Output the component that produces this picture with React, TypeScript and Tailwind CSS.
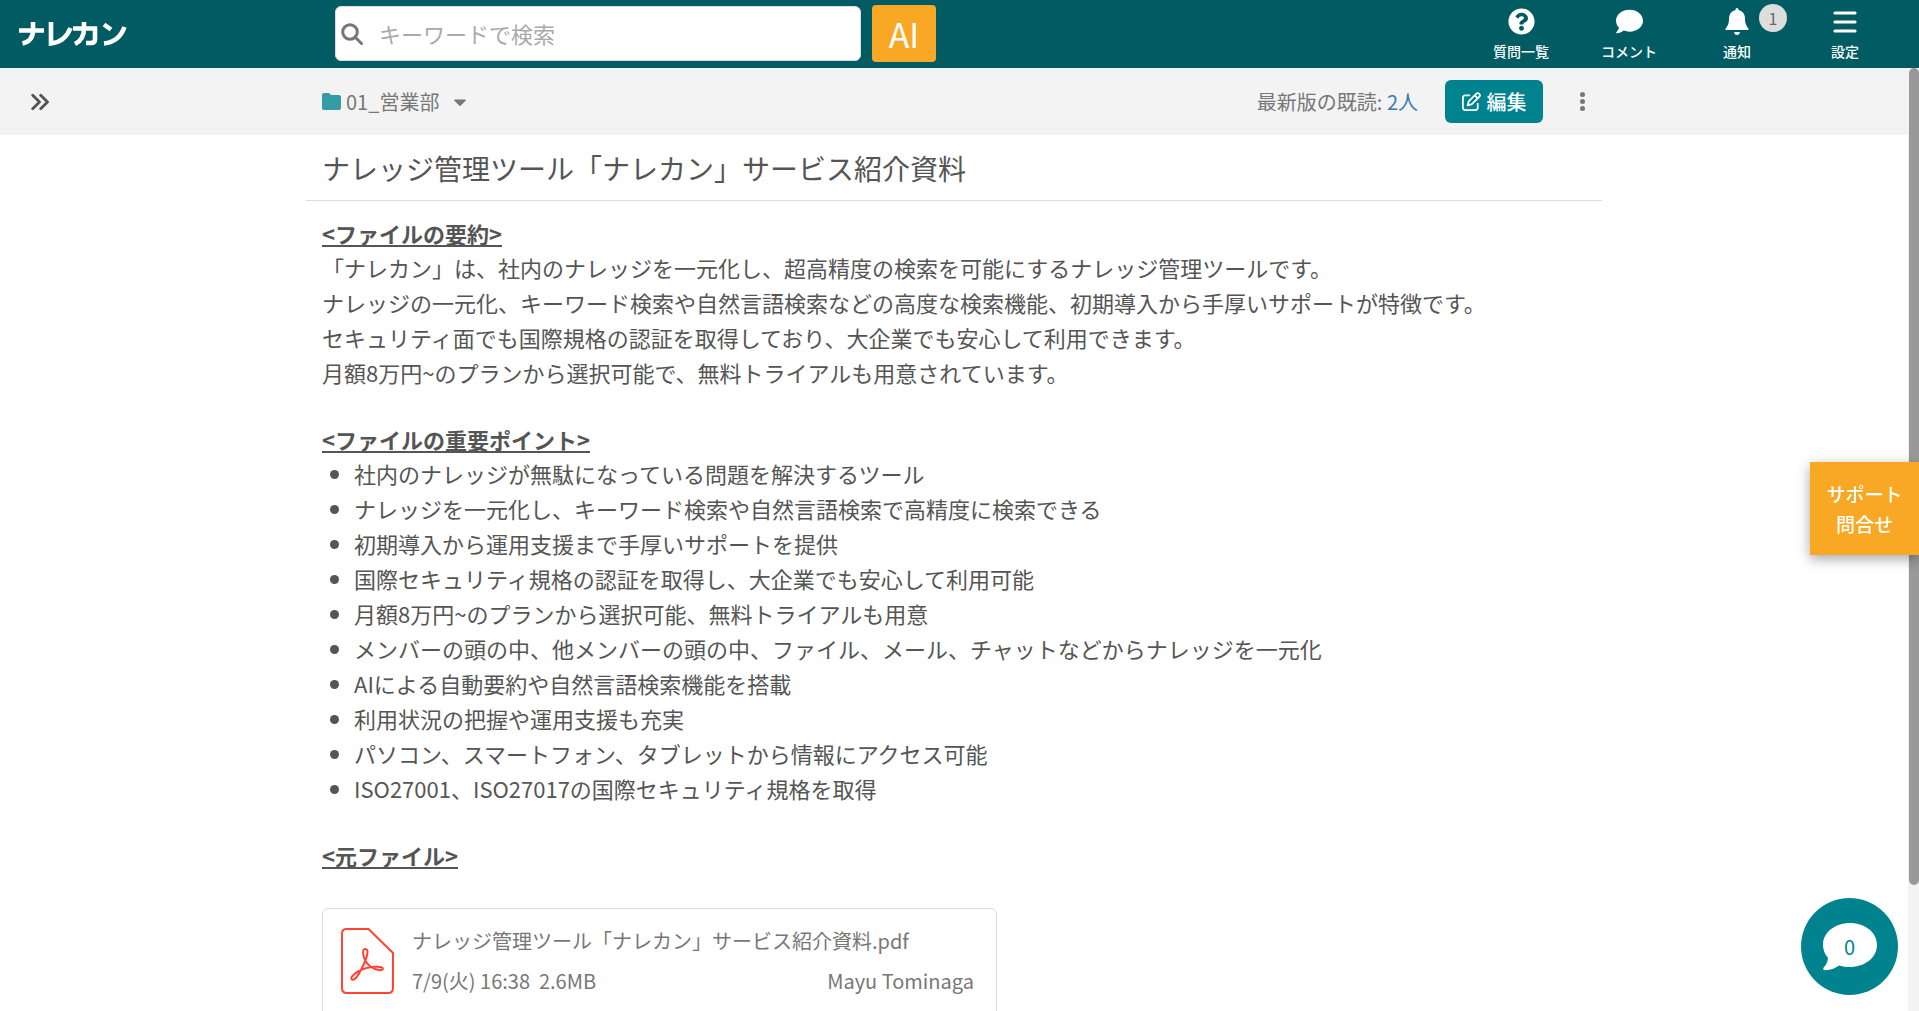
import { ReactNode } from 'react';
import { FaCaretDown, FaComment, FaQuestionCircle } from 'react-icons/fa';
import { FaRegPenToSquare } from 'react-icons/fa6';

// ── Data ──────────────────────────────────────────────────────────────────────

const SUMMARY = [
  '「ナレカン」は、社内のナレッジを一元化し、超高精度の検索を可能にするナレッジ管理ツールです。',
  'ナレッジの一元化、キーワード検索や自然言語検索などの高度な検索機能、初期導入から手厚いサポートが特徴です。',
  'セキュリティ面でも国際規格の認証を取得しており、大企業でも安心して利用できます。',
  '月額8万円~のプランから選択可能で、無料トライアルも用意されています。',
];

const POINTS = [
  '社内のナレッジが無駄になっている問題を解決するツール',
  'ナレッジを一元化し、キーワード検索や自然言語検索で高精度に検索できる',
  '初期導入から運用支援まで手厚いサポートを提供',
  '国際セキュリティ規格の認証を取得し、大企業でも安心して利用可能',
  '月額8万円~のプランから選択可能、無料トライアルも用意',
  'メンバーの頭の中、他メンバーの頭の中、ファイル、メール、チャットなどからナレッジを一元化',
  'AIによる自動要約や自然言語検索機能を搭載',
  '利用状況の把握や運用支援も充実',
  'パソコン、スマートフォン、タブレットから情報にアクセス可能',
  'ISO27001、ISO27017の国際セキュリティ規格を取得',
];

// ── Icons ─────────────────────────────────────────────────────────────────────

function LogoSVG() {
  return (
    <svg width="108" height="26" viewBox="0 0 108 26" fill="none" stroke="white" strokeWidth="4.6" aria-hidden="true">
      <path d="M0 9.5H25M14 1V9.5Q14 20 3.5 22.5"/>
      <path d="M32 1V22.5Q46 21 51.5 7"/>
      <path d="M54 7.5H76V18Q76 22 72 22H67M65 1V7.5Q65 18.5 56 23"/>
      <path d="M85 3.5L92 8.5M85 22.5Q100 21 105.5 6"/>
    </svg>
  );
}

function BellIcon() {
  return (
    <svg width="24" height="27" viewBox="0 0 24 27" fill="white">
      <path d="M12 0Q13.6 0 13.6 2Q20 3.5 20 11Q20 17 23.5 20.5V22H.5V20.5Q4 17 4 11Q4 3.5 10.4 2Q10.4 0 12 0Z"/>
      <path d="M9 24H15Q14.5 27 12 27T9 24Z"/>
    </svg>
  );
}

function MenuIcon() {
  return (
    <svg width="24" height="22" viewBox="0 0 24 22" stroke="white" strokeWidth="3.2" strokeLinecap="round">
      <path d="M2 2H22M2 11H22M2 20H22"/>
    </svg>
  );
}

function SearchIcon() {
  return (
    <svg width="22" height="22" viewBox="0 0 22 22" fill="none" stroke="#777" strokeWidth="3">
      <circle cx="9" cy="9" r="7.3"/>
      <path d="M14 14L20.5 20.5" strokeLinecap="round"/>
    </svg>
  );
}

function ExpandIcon() {
  return (
    <svg width="18" height="18" viewBox="0 0 18 18" fill="none" stroke="#555" strokeWidth="2.8" strokeLinecap="round" strokeLinejoin="round">
      <path d="M1.7 2.2L8.5 9L1.7 15.8M9.7 2.2L16.5 9L9.7 15.8"/>
    </svg>
  );
}

function FolderIcon() {
  return (
    <svg width="19" height="17" viewBox="0 0 19 17" fill="#339ca5">
      <path d="M2 0H7L9 2H17Q19 2 19 4V15Q19 17 17 17H2Q0 17 0 15V2Q0 0 2 0Z"/>
    </svg>
  );
}

function PdfIcon() {
  return (
    <svg width="53" height="66" viewBox="0 0 53 66" fill="none" stroke="#ff4433" strokeWidth="2">
      <path d="M5 1H27.5L52 25V60Q52 65 47 65H6Q1 65 1 60V6Q1 1 5 1Z"/>
      <path d="M24 21C21 21 22 28 24 32C26 36 31 41 38 42C43 42.5 43 39.5 39 39C33 38.5 24 40 18 43C12 46 9 50 11 51.5C14 53 18 46 21 40C24 34 27 27 26.5 23C26 21 25 21 24 21Z"/>
    </svg>
  );
}

// ── Parts ─────────────────────────────────────────────────────────────────────

function NavItem({ label, badge, children }: { label: string; badge?: number; children: ReactNode }) {
  return (
    <button className="relative flex w-[108px] flex-col items-center gap-[5px] text-white">
      <span className="flex h-7 items-center">{children}</span>
      <span className="text-sm font-medium leading-5">{label}</span>
      {badge !== undefined && (
        <span className="absolute -top-1 left-[76px] flex size-7 items-center justify-center rounded-full bg-[#ddd] text-base text-[#666]">
          {badge}
        </span>
      )}
    </button>
  );
}

function SectionTitle({ children }: { children: ReactNode }) {
  return (
    <h2 className="font-bold leading-[34px] underline decoration-2 underline-offset-2">{children}</h2>
  );
}

function Header() {
  return (
    <header className="flex h-[68px] shrink-0 items-center bg-[#005b63] pr-5">
      <a href="#" aria-label="ナレカン" className="w-[335px] shrink-0 pl-[19px]">
        <LogoSVG/>
      </a>
      <form className="flex items-center gap-[11px] pb-px">
        <div className="flex h-[55px] w-[526px] items-center gap-4 rounded-md border border-[#ddd] bg-white pl-[5px]">
          <SearchIcon/>
          <input
            type="text"
            aria-label="キーワードで検索"
            placeholder="キーワードで検索"
            className="min-w-0 flex-1 text-[22px] outline-none placeholder:text-[#aaa]"
          />
        </div>
        <button type="button" className="h-[57px] w-16 rounded-sm bg-[#f9a825] text-[34px] leading-none text-white">AI</button>
      </form>
      <nav className="ml-auto flex">
        <NavItem label="質問一覧"><FaQuestionCircle className="size-[27px]"/></NavItem>
        <NavItem label="コメント"><FaComment className="size-[27px]"/></NavItem>
        <NavItem label="通知" badge={1}><BellIcon/></NavItem>
        <NavItem label="設定"><MenuIcon/></NavItem>
      </nav>
    </header>
  );
}

function Toolbar() {
  return (
    <div className="relative bg-[#f3f3f3]">
      <button aria-label="メニューを開く" className="absolute inset-y-0 left-[31px]">
        <ExpandIcon/>
      </button>
      <div className="mx-auto flex h-[67px] max-w-[1296px] items-center px-4 text-[20px] text-[#777]">
        <button className="flex items-center gap-[5px]">
          <FolderIcon/>
          <span>01_営業部</span>
          <FaCaretDown className="ml-[6px] size-5"/>
        </button>
        <p className="ml-auto">
          最新版の既読: <a href="#" className="text-[#337ab7]">2人</a>
        </p>
        <button className="ml-[27px] flex h-[43px] w-[98px] items-center justify-center gap-[6px] rounded-md bg-[#00838f] font-medium text-white">
          <FaRegPenToSquare className="size-[19px]"/>
          編集
        </button>
        <button aria-label="その他" className="ml-[37px] flex flex-col gap-[2px] pr-px">
          <span className="size-[5px] rounded-full bg-[#777]"/>
          <span className="size-[5px] rounded-full bg-[#777]"/>
          <span className="size-[5px] rounded-full bg-[#777]"/>
        </button>
      </div>
    </div>
  );
}

function FileCard() {
  return (
    <a href="#" className="mt-9 flex h-[120px] max-w-[675px] gap-[18px] rounded-md border border-[#ddd] px-[18px] pt-[19px] text-[20px] text-[#777]">
      <PdfIcon/>
      <div className="flex-1 leading-[26px]">
        <p>ナレッジ管理ツール「ナレカン」サービス紹介資料.pdf</p>
        <div className="mt-[14px] flex justify-between pr-1">
          <p>7/9(火) 16:38&nbsp; 2.6MB</p>
          <p>Mayu Tominaga</p>
        </div>
      </div>
    </a>
  );
}

// ── App ───────────────────────────────────────────────────────────────────────

export default function App() {
  return (
    <div className="flex h-screen flex-col overflow-hidden bg-white font-['Noto_Sans_CJK_JP',sans-serif] text-[#555]">
      <Header/>
      <div className="flex min-h-0 flex-1">
        <main className="min-w-0 flex-1 overflow-hidden">
          <Toolbar/>
          <article className="mx-auto max-w-[1296px]">
            <h1 className="border-b border-[#ddd] px-4 pb-3 pt-[13px] text-[28px] leading-10">
              ナレッジ管理ツール「ナレカン」サービス紹介資料
            </h1>
            <div className="px-4 pt-[15px] text-[22px] leading-[35px]">
              <SectionTitle>&lt;ファイルの要約&gt;</SectionTitle>
              {SUMMARY.map((line) => <p key={line}>{line}</p>)}
              <div className="mt-8">
                <SectionTitle>&lt;ファイルの重要ポイント&gt;</SectionTitle>
                <ul className="list-disc pl-8">
                  {POINTS.map((point) => <li key={point}>{point}</li>)}
                </ul>
              </div>
              <div className="mt-8">
                <SectionTitle>&lt;元ファイル&gt;</SectionTitle>
                <FileCard/>
              </div>
            </div>
          </article>
        </main>
        {/* Scrollbar */}
        <div className="w-[11px] shrink-0 bg-[#f3f3f3] pl-px">
          <div className="h-13/15 rounded-full bg-[#999]"/>
        </div>
      </div>

      <button className="fixed right-0 top-[462px] h-[93px] w-[109px] bg-[#f9a825] text-[19px] font-medium leading-[30px] text-white shadow-[0_4px_12px_rgba(0,0,0,0.35)]">
        サポート<br/>問合せ
      </button>
      <button aria-label="チャット" className="fixed bottom-4 right-[21px] flex size-[97px] items-center justify-center rounded-full bg-[#00838f]">
        <svg width="54" height="48" viewBox="0 0 54 48" fill="white">
          <path d="M27 0C42 0 54 9.5 54 22S42 44 27 44Q21 44 16 42.5Q8 48 1 47Q-1 46 2 43Q5 39 5 35Q0 29 0 22C0 9.5 12 0 27 0Z"/>
        </svg>
        <span className="absolute text-[20px] leading-none text-[#00838f]">0</span>
      </button>
    </div>
  );
}
